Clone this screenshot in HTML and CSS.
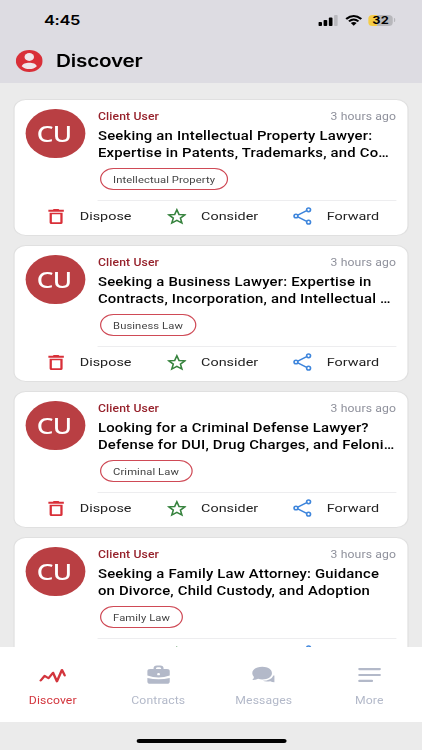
FILE: index.html
```
<!DOCTYPE html>
<html lang="en">
<head>
    <meta charset="UTF-8">
    <meta name="viewport" content="width=device-width, initial-scale=1.0">
    <title>Discover</title>
    <link rel="stylesheet" href="styles.css">
</head>
<body>
    <!-- Icons -->
    <svg class="sprite">
        <symbol id="trash" viewBox="0 0 24 24"><path fill-rule="evenodd" d="M2.5 2H8L9 0.8H15L16 2H21.5V4.8H2.5ZM4 6.2H20V21Q20 23.4 17.8 23.4H6.2Q4 23.4 4 21ZM6.8 8.8V20.8H17.2V8.8Z"/></symbol>
        <symbol id="star" viewBox="0 0 24 24" preserveAspectRatio="none"><path d="M12 2.5L14.7 9.2L22 9.7L16.4 14.3L18.2 21.3L12 17.5L5.8 21.3L7.6 14.3L2 9.7L9.3 9.2Z"/></symbol>
        <symbol id="share" viewBox="0 0 24 24" preserveAspectRatio="none"><path d="M6.2 10.9L17.2 4.8M6.2 13.1L17.2 19.2"/><circle cx="4" cy="12" r="2.4"/><circle cx="19.5" cy="3.8" r="2.4"/><circle cx="19.5" cy="20.2" r="2.4"/></symbol>
    </svg>

    <div class="app">
        <div class="status-bar">
            <div class="time">4:45</div>
            <div class="status-icons">
                <svg class="signal" viewBox="0 0 16 11">
                    <rect x="0" y="7" width="3" height="4" rx="0.8"/>
                    <rect x="4.3" y="5" width="3" height="6" rx="0.8"/>
                    <rect x="8.6" y="2.6" width="3" height="8.4" rx="0.8"/>
                    <rect x="12.9" y="0" width="3" height="11" rx="0.8" fill="#b9b9be"/>
                </svg>
                <svg class="wifi" viewBox="0 0 14 11">
                    <path d="M0.8 4Q7 -1.8 13.2 4M3.1 6.4Q7 2.8 10.9 6.4" fill="none" stroke="#000" stroke-width="1.9"/>
                    <path d="M4.6 8Q7 6 9.4 8L7 10.7Z"/>
                </svg>
                <div class="battery">32</div>
                <div class="battery-tip"></div>
            </div>
        </div>

        <div class="header">
            <svg class="profile" viewBox="0 0 22 22">
                <circle cx="11" cy="11" r="11" fill="#d92f38"/>
                <circle cx="11" cy="7" r="3.9" fill="#f0e6ea"/>
                <path d="M4.8 16.2C6 11.6 16 11.6 17.2 16.2C14 20 8 20 4.8 16.2Z" fill="#f0e6ea"/>
            </svg>
            <h1>Discover</h1>
        </div>

        <div class="feed">
            <div class="card">
                <div class="card-top">
                    <div class="avatar">CU</div>
                    <div class="card-body">
                        <div class="meta"><span class="author">Client User</span><span class="ago">3 hours ago</span></div>
                        <h2>Seeking an Intellectual Property Lawyer:<br>Expertise in Patents, Trademarks, and Co…</h2>
                        <span class="tag">Intellectual Property</span>
                    </div>
                </div>
                <div class="actions">
                    <div class="action"><svg class="trash"><use href="#trash"/></svg>Dispose</div>
                    <div class="action"><svg class="star"><use href="#star"/></svg>Consider</div>
                    <div class="action"><svg class="share"><use href="#share"/></svg>Forward</div>
                </div>
            </div>

            <div class="card">
                <div class="card-top">
                    <div class="avatar">CU</div>
                    <div class="card-body">
                        <div class="meta"><span class="author">Client User</span><span class="ago">3 hours ago</span></div>
                        <h2>Seeking a Business Lawyer: Expertise in<br>Contracts, Incorporation, and Intellectual …</h2>
                        <span class="tag">Business Law</span>
                    </div>
                </div>
                <div class="actions">
                    <div class="action"><svg class="trash"><use href="#trash"/></svg>Dispose</div>
                    <div class="action"><svg class="star"><use href="#star"/></svg>Consider</div>
                    <div class="action"><svg class="share"><use href="#share"/></svg>Forward</div>
                </div>
            </div>

            <div class="card">
                <div class="card-top">
                    <div class="avatar">CU</div>
                    <div class="card-body">
                        <div class="meta"><span class="author">Client User</span><span class="ago">3 hours ago</span></div>
                        <h2>Looking for a Criminal Defense Lawyer?<br>Defense for DUI, Drug Charges, and Feloni…</h2>
                        <span class="tag">Criminal Law</span>
                    </div>
                </div>
                <div class="actions">
                    <div class="action"><svg class="trash"><use href="#trash"/></svg>Dispose</div>
                    <div class="action"><svg class="star"><use href="#star"/></svg>Consider</div>
                    <div class="action"><svg class="share"><use href="#share"/></svg>Forward</div>
                </div>
            </div>

            <div class="card">
                <div class="card-top">
                    <div class="avatar">CU</div>
                    <div class="card-body">
                        <div class="meta"><span class="author">Client User</span><span class="ago">3 hours ago</span></div>
                        <h2>Seeking a Family Law Attorney: Guidance<br>on Divorce, Child Custody, and Adoption</h2>
                        <span class="tag">Family Law</span>
                    </div>
                </div>
                <div class="actions">
                    <div class="action"><svg class="trash"><use href="#trash"/></svg></div>
                    <div class="action"><svg class="star"><use href="#star"/></svg></div>
                    <div class="action"><svg class="share"><use href="#share"/></svg></div>
                </div>
            </div>
        </div>

        <!-- Bottom navigation -->
        <div class="bottom-nav">
            <div class="nav-item active">
                <svg viewBox="0 0 24 24"><path d="M1.5 18L5 13L8.5 15.5L12.5 9.5L16 19L20.5 6.5L23 12.5" fill="none" stroke="currentColor" stroke-width="2.2" stroke-linejoin="round" stroke-linecap="round"/></svg>
                <span>Discover</span>
            </div>
            <div class="nav-item">
                <svg viewBox="0 0 24 24" fill="currentColor"><path fill-rule="evenodd" d="M7.5 5.5V5Q7.5 1.5 10.5 1.5H13.5Q16.5 1.5 16.5 5V5.5H19.5Q22 5.5 22 8V12.5Q17 14.8 12 14.8Q7 14.8 2 12.5V8Q2 5.5 4.5 5.5ZM9.6 5.5H14.4Q14.4 3.6 13 3.6H11Q9.6 3.6 9.6 5.5ZM12 9.8A1.3 1.3 0 1 0 12 12.4A1.3 1.3 0 1 0 12 9.8Z"/><path d="M2 15.2Q12 18.2 22 15.2V19Q22 21.5 19.5 21.5H4.5Q2 21.5 2 19Z"/></svg>
                <span>Contracts</span>
            </div>
            <div class="nav-item">
                <svg viewBox="0 0 24 24" fill="currentColor"><path d="M11 3C16 3 19.6 6 19.6 10S16 16.8 11 16.8Q9 16.8 7.2 16.2Q5 17.6 2 17.3Q3.5 15.8 3.5 14.2Q2 12.4 2 10C2 6 5.8 3 11 3Z"/><path d="M20.9 12.5H21.8V20Q19.5 20 18.2 18.8Q14 19.8 11.5 18.4Q19 18 20.9 12.5Z"/></svg>
                <span>Messages</span>
            </div>
            <div class="nav-item">
                <svg viewBox="0 0 24 24"><path d="M3 5.5H21M3 12H21M3 18.5H14" stroke="currentColor" stroke-width="2.4" stroke-linecap="round"/></svg>
                <span>More</span>
            </div>
        </div>
        <div class="home-bar"><div class="indicator"></div></div>
    </div>
</body>
</html>
```
FILE: styles.css
```
* {
    box-sizing: border-box;
}

body {
    margin: 0;
    overflow: hidden;
    background: #ebebeb;
    font-family: Roboto, "Liberation Sans", sans-serif;
}

.sprite {
    display: none;
}

.app {
    width: 346px;
    height: 750px;
    display: flex;
    flex-direction: column;
    transform: scaleX(1.2197);
    transform-origin: 0 0;
}

/* Status bar */
.status-bar {
    display: flex;
    justify-content: space-between;
    align-items: center;
    height: 40px;
    padding: 0 22px 0 36px;
    background: #dddce2;
}

.time {
    font-family: Inter, sans-serif;
    font-size: 13.5px;
    font-weight: 600;
    letter-spacing: -0.3px;
}

.status-icons {
    display: flex;
    align-items: center;
}

.signal {
    width: 16px;
    height: 11px;
    margin-right: 6px;
}

.wifi {
    width: 14px;
    height: 11px;
    margin-right: 5px;
}

.battery {
    width: 20px;
    height: 11px;
    border-radius: 3.5px;
    background: linear-gradient(90deg, #f4cc45 34%, #b7b7bb 34%);
    font-family: Inter, sans-serif;
    font-size: 10.5px;
    font-weight: 700;
    line-height: 11px;
    text-align: center;
}

.battery-tip {
    width: 1px;
    height: 4px;
    margin-left: 1px;
    border-radius: 0 1px 1px 0;
    background: #b7b7bb;
}

.header {
    display: flex;
    align-items: center;
    height: 43px;
    padding: 0 13px 1px;
    background: #dddce2;
}

.profile {
    width: 22px;
    height: 22px;
    margin-right: 11px;
}

.header h1 {
    margin: 0;
    font-family: Inter, sans-serif;
    font-size: 17px;
    font-weight: 600;
    letter-spacing: -0.2px;
}

/* Cards */
.feed {
    flex: 1;
    min-height: 0;
    overflow: hidden;
    padding: 16px 10.8px 0;
}

.card {
    height: 137px;
    margin-bottom: 9px;
    padding: 9px 9.5px;
    border: 1px solid #e0e0e0;
    border-radius: 10px;
    background: white;
}

.card-top {
    display: flex;
}

.avatar {
    flex-shrink: 0;
    width: 48.5px;
    height: 49px;
    margin-right: 10.5px;
    padding-right: 2.5px;
    border-radius: 50%;
    background: #b93f43;
    color: white;
    font-family: "Noto Sans", sans-serif;
    font-size: 21.5px;
    font-weight: 500;
    line-height: 49px;
    letter-spacing: -0.5px;
    text-align: center;
}

.card-body {
    flex: 1;
    min-width: 0;
    padding-top: 1px;
}

.meta {
    display: flex;
    justify-content: space-between;
    height: 18px;
    font-size: 10px;
    line-height: 13px;
    letter-spacing: 0.1px;
}

.author {
    color: #96212b;
    font-weight: 500;
}

.ago {
    color: #8f919c;
}

.card h2 {
    margin: 0;
    font-size: 12.2px;
    font-weight: 500;
    line-height: 17px;
    letter-spacing: 0.16px;
    white-space: nowrap;
}

.tag {
    display: block;
    width: fit-content;
    height: 22px;
    margin: 6px 0 0 1.4px;
    padding: 0 10px;
    border: 1px solid #cf4a56;
    border-radius: 11px;
    color: #444;
    font-size: 9.2px;
    line-height: 21px;
    letter-spacing: 0.08px;
}

.actions {
    display: flex;
    position: relative;
    padding: 9px 0 0 16.4px;
}

.actions::before {
    content: "";
    position: absolute;
    top: 10px;
    left: 59px;
    right: 0;
    height: 1px;
    background: #ededef;
}

.action {
    display: flex;
    flex-shrink: 0;
    align-items: center;
    width: 99.5px;
    height: 34px;
    color: #222;
    font-size: 11.8px;
}

.action:nth-child(2) {
    width: 103px;
}

.action:nth-child(3) {
    width: 80px;
}

.action svg {
    width: 16px;
    height: 17px;
    margin-right: 11.7px;
}

.trash {
    fill: #d92f38;
}

.star {
    fill: none;
    stroke: #37833e;
    stroke-width: 2;
}

.share {
    fill: none;
    stroke: #3f86dc;
    stroke-width: 2;
}

.action svg.share {
    height: 18px;
}

/* Bottom Navigation */
.bottom-nav {
    display: flex;
    height: 75px;
    background: white;
}

.nav-item {
    flex: 1;
    display: flex;
    flex-direction: column;
    align-items: center;
    padding-top: 17px;
    color: #b3b9c9;
    font-size: 10px;
    line-height: 12px;
    letter-spacing: 0.1px;
}

.nav-item svg {
    width: 22px;
    height: 22px;
    margin-bottom: 9px;
}

.nav-item.active {
    color: #d3353d;
}

.home-bar {
    display: flex;
    justify-content: center;
    height: 28px;
    padding-top: 17px;
    background: #ebebeb;
}

.indicator {
    width: 123px;
    height: 4px;
    border-radius: 2px;
    background: black;
}
```
